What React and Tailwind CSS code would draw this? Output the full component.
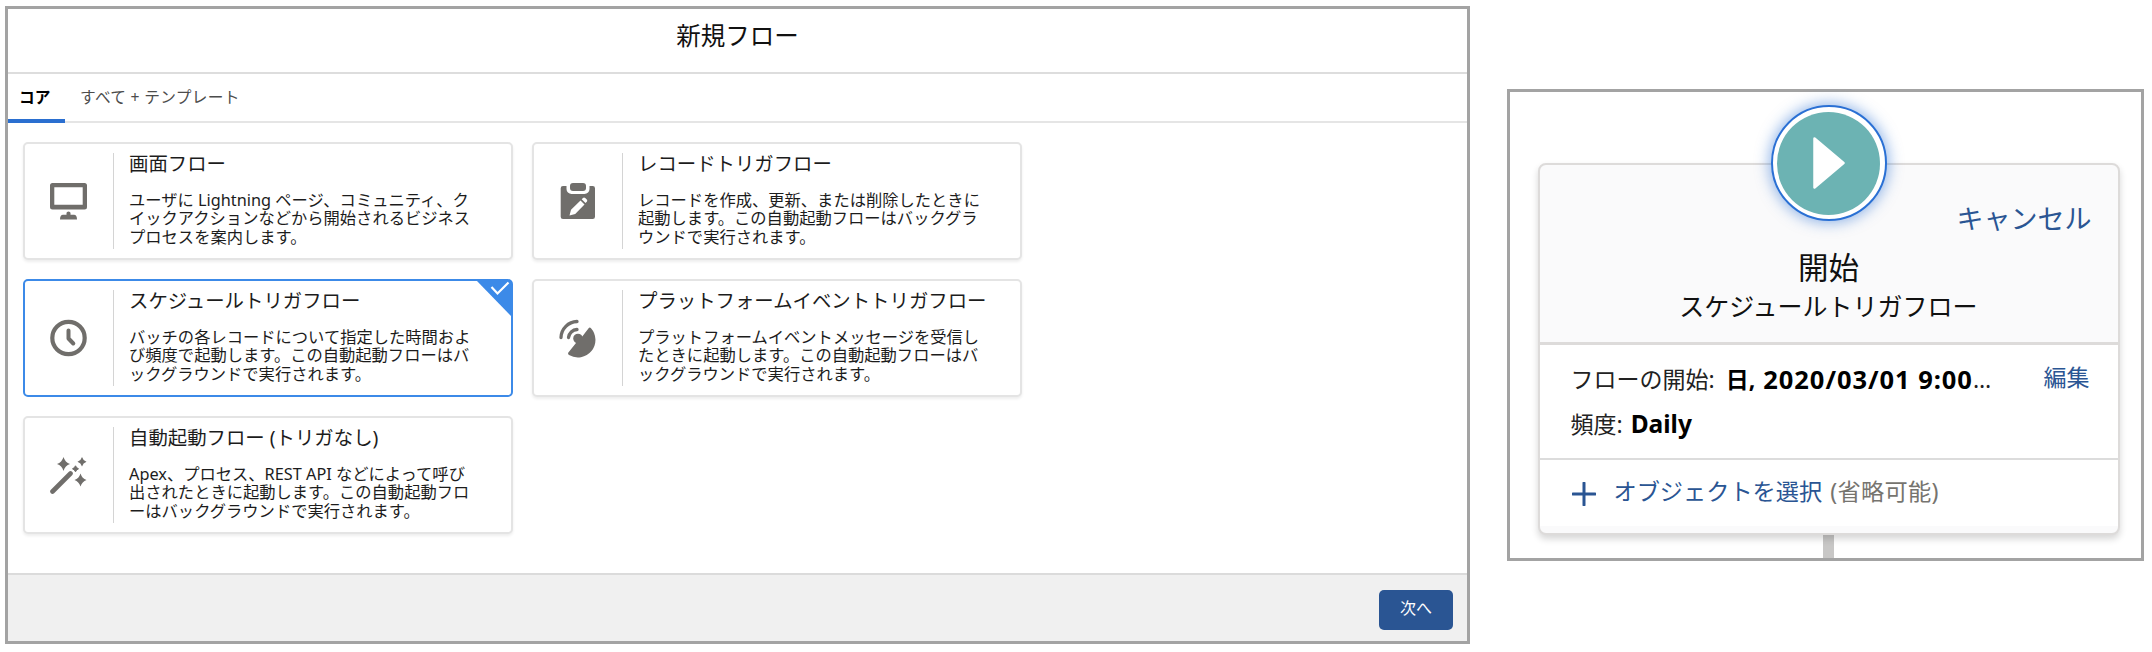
const JP = "font-['Noto_Sans','Noto_Sans_CJK_JP',sans-serif]";

const G = "#706e6b";

function MonitorIcon() {
  return (
    <svg className="mt-px" width="38" height="40" viewBox="0 0 38 40" fill={G}>
      <path fillRule="evenodd" d="M2.500 1h32a2.500 2.500 0 0 1 2.500 2.500v21.500a2.500 2.500 0 0 1-2.500 2.500h-32a2.500 2.500 0 0 1-2.500-2.500v-21.500a2.500 2.500 0 0 1 2.500-2.500zM4.300 5.300v17.500h28.400v-17.500z" />
      <path d="M16.500 31q0-1.500 2-1.500t2 1.500v1.700h3.500q3 0 3 4.700h-17q0-4.700 3-4.700h3.500z" />
    </svg>
  );
}

function ClipboardIcon() {
  return (
    <svg className="mt-px" width="38" height="40" viewBox="0 0 38 40" fill={G}>
      <rect x="11" y="1" width="16" height="8" rx="3" />
      <path d="M4 4h3.500v3a5 5 0 0 0 5 5h13a5 5 0 0 0 5-5v-3h3.200a2.300 2.300 0 0 1 2.300 2.300v28.400a2.300 2.300 0 0 1-2.300 2.300h-29.700a2.300 2.300 0 0 1-2.300-2.300v-28.400a2.300 2.300 0 0 1 2.300-2.300z" />
      <path fill="#fff" d="M10.500 33.500l1.500-5.800 9.500-9.300 4 4-9.300 9.500zM22.700 17.200l1.300-1.300q1-1 2.200 0l1.600 1.600q1 1.200 0 2.200l-1.300 1.300z" />
    </svg>
  );
}

function ClockIcon() {
  return (
    <svg className="mt-px" width="38" height="40" viewBox="0 0 38 40" fill="none" stroke={G}>
      <circle cx="18.500" cy="19" r="16.200" strokeWidth="4.200" />
      <path d="M18.500 11.500v8l4.800 5" strokeWidth="4" strokeLinecap="round" strokeLinejoin="round" />
    </svg>
  );
}

function DishIcon() {
  return (
    <svg className="mt-px" width="38" height="40" viewBox="0 0 38 40" fill={G}>
      <path d="M2 18.500A16.500 16.500 0 0 1 18 2.500M9.500 18.500A9 9 0 0 1 18 10.500" fill="none" stroke={G} strokeWidth="3.300" strokeLinecap="round" />
      <circle cx="19" cy="19.500" r="4.800" />
      <path d="M29.600 9.200q1.200-1.200 2.400.1a17.500 17.500 0 0 1-22 26.700q-1.700-1.300-.4-2.700l7.400-9.300 5.500-5.500z" />
    </svg>
  );
}

function WandIcon() {
  return (
    <svg className="mt-px" width="38" height="40" viewBox="0 0 38 40" fill={G}>
      <path d="M2.500 35.500L20.500 17.500" stroke={G} strokeWidth="4.600" strokeLinecap="round" />
      <path d="M25.500 9.800q.8 2.200 3 3-2.200.8-3 3-.8-2.200-3-3 2.200-.8 3-3z" stroke={G} />
      <path d="M13.500 1q1.600 5.400 6.500 7-4.900 1.600-6.500 7-1.600-5.400-6.500-7 4.900-1.600 6.500-7z" />
      <path d="M32 1q1 3.600 4.500 4.800-3.500 1.200-4.500 4.800-1-3.600-4.500-4.800 3.500-1.200 4.500-4.800z" />
      <path d="M30.500 17.500q1.600 5 6 6.500-4.400 1.500-6 6.500-1.600-5-6-6.500 4.400-1.500 6-6.500z" />
    </svg>
  );
}

const FLOWS = [
  { title: "画面フロー", icon: MonitorIcon, lines: ["ユーザに Lightning ページ、コミュニティ、ク", "イックアクションなどから開始されるビジネス", "プロセスを案内します。"] },
  { title: "レコードトリガフロー", icon: ClipboardIcon, lines: ["レコードを作成、更新、または削除したときに", "起動します。この自動起動フローはバックグラ", "ウンドで実行されます。"] },
  { title: "スケジュールトリガフロー", icon: ClockIcon, selected: true, lines: ["バッチの各レコードについて指定した時間およ", "び頻度で起動します。この自動起動フローはバ", "ックグラウンドで実行されます。"] },
  { title: "プラットフォームイベントトリガフロー", icon: DishIcon, lines: ["プラットフォームイベントメッセージを受信し", "たときに起動します。この自動起動フローはバ", "ックグラウンドで実行されます。"] },
  { title: "自動起動フロー (トリガなし)", icon: WandIcon, lines: ["Apex、プロセス、REST API などによって呼び", "出されたときに起動します。この自動起動フロ", "ーはバックグラウンドで実行されます。"] },
];

function FlowCard({ flow }) {
  const Icon = flow.icon;
  return (
    <div
      className={
        flow.selected
          ? "relative flex h-[118px] w-[490px] rounded-[5px] border-2 border-[#3c8ae8] bg-white py-[9px]"
          : "relative flex h-[118px] w-[490px] rounded-[5px] border-2 border-[#e4e4e4] bg-white py-[9px] shadow-[0_2px_3px_rgba(0,0,0,0.07)]"
      }
    >
      <div className="flex w-[89px] shrink-0 items-center justify-center border-r border-[#d4d4d4]">
        <Icon />
      </div>
      <div className="pl-[15px] text-[#1c1c1c]">
        <h3 className="-mt-[3px] text-[19.400px] leading-[28px] whitespace-nowrap">{flow.title}</h3>
        <div className="mt-[13px] text-[16.300px] leading-[18.400px]">
          {flow.lines.map((line) => (
            <p key={line} className="whitespace-nowrap">{line}</p>
          ))}
        </div>
      </div>
      {flow.selected && (
        <svg className="absolute -top-px -right-px" width="36" height="37" viewBox="0 0 36 37">
          <path d="M0 0H33Q36 0 36 3V37z" fill="#3c8ae8" />
          <path d="M15.500 7l6 6.500L32.500 2.500" fill="none" stroke="#fff" strokeWidth="2.200" />
        </svg>
      )}
    </div>
  );
}

function NewFlowDialog() {
  return (
    <section className="flex h-[638px] w-[1465px] flex-col border-[3px] border-[#a3a3a3] bg-white">
      <header className="flex h-[65px] shrink-0 items-start justify-center border-b-2 border-[#dddddd] pt-[9px]">
        <h1 className="text-[24.500px] leading-[36px] text-[#111]">新規フロー</h1>
      </header>
      <nav className="flex h-[49px] shrink-0 border-b-2 border-[#e5e5e5] text-[15.700px] leading-[46px]">
        <span className="h-[49px] w-[57px] border-b-4 border-[#2a6fd0] pl-[11px] font-bold text-black">コア</span>
        <span className="pl-[15px] tracking-[0.3px] text-[#4c4c4c]">すべて + テンプレート</span>
      </nav>
      <div className="grid grow grid-cols-[490px_490px] content-start gap-x-[19px] gap-y-[19px] pt-[19px] pl-[15px]">
        {FLOWS.map((flow) => (
          <FlowCard key={flow.title} flow={flow} />
        ))}
      </div>
      <footer className="flex h-[68px] shrink-0 justify-end border-t-2 border-[#dbdbdb] bg-[#f0f0f0] pt-[15px] pr-[14px]">
        <button className="h-[40px] w-[74px] rounded-[5px] bg-[#2a5593] pb-[4px] text-[16px] text-white">次へ</button>
      </footer>
    </section>
  );
}

function StartNode() {
  return (
    <section className="mt-[83px] flex h-[472px] w-[637px] flex-col items-center border-[3px] border-[#a3a3a3] bg-white pt-[71px] pl-[6px]">
      <div className="relative flex h-[372px] w-[582px] shrink-0 flex-col rounded-[8px] border-2 border-[#dddbda] bg-[#fafafb] shadow-[0_4px_7px_rgba(0,0,0,0.16)]">
        <div className="absolute -top-[60px] left-[231px] flex size-[116px] items-center justify-center rounded-full border-2 border-[#2a70d4] bg-white shadow-[0_0_14px_2px_rgba(42,112,212,0.5)]">
          <div className="flex size-[103px] items-center justify-center rounded-full bg-[#6cb3b3]">
            <svg width="32" height="52" viewBox="0 0 32 52">
              <path d="M1.500 1.500L30.500 26 1.500 50.500z" fill="#fff" stroke="#fff" strokeWidth="2.500" strokeLinejoin="round" />
            </svg>
          </div>
        </div>
        <div className="flex h-[180px] shrink-0 flex-col items-center border-b-[3px] border-[#dddbda] pt-[36px] text-[#111]">
          <a className="self-end pr-[26px] text-[27px] leading-[36px] text-[#2a5593]">キャンセル</a>
          <h2 className="mt-[8px] text-[30.500px] leading-[44px]">開始</h2>
          <p className="mt-px text-[25px] leading-[32px] whitespace-nowrap">スケジュールトリガフロー</p>
        </div>
        <div className="flex h-[115px] shrink-0 justify-between border-b-2 border-[#dcdcdc] bg-white pt-[16px] pr-[28px] pl-[31px] text-[23px] leading-[36px] text-[#222]">
          <div>
            <p className="flex whitespace-nowrap">
              <span>フローの開始:</span>
              <b className="ml-[11px] text-black">日,</b>
              <b className="ml-[8px] text-[25.500px] tracking-[0.950px] text-black">2020/03/01 9:00</b>
              <span>…</span>
            </p>
            <p className="mt-[9px] flex">
              <span>頻度:</span>
              <b className="ml-[8px] text-[24.500px] text-black">Daily</b>
            </p>
          </div>
          <a className="-mt-[2px] text-[#2a5593]">編集</a>
        </div>
        <div className="flex h-[66px] shrink-0 items-start bg-white pt-[14px] pl-[32px] text-[23.200px] leading-[34px] text-[#2a5593]">
          <svg className="mt-[8px]" width="24" height="24" viewBox="0 0 24 24">
            <path d="M12 1v22M1 12h22" stroke="#2a5593" strokeWidth="3" strokeLinecap="round" />
          </svg>
          <span className="ml-[18px] whitespace-nowrap">オブジェクトを選択</span>
          <span className="ml-[8px] tracking-[0.300px] whitespace-nowrap text-[#76746f]">(省略可能)</span>
        </div>
      </div>
      <div className="w-[11px] grow bg-[#c8c7c6]" />
    </section>
  );
}

export default function App() {
  return (
    <main className={`${JP} flex h-[652px] w-[2152px] items-start gap-[37px] overflow-hidden bg-white pt-[6px] pl-[5px]`}>
      <NewFlowDialog />
      <StartNode />
    </main>
  );
}
